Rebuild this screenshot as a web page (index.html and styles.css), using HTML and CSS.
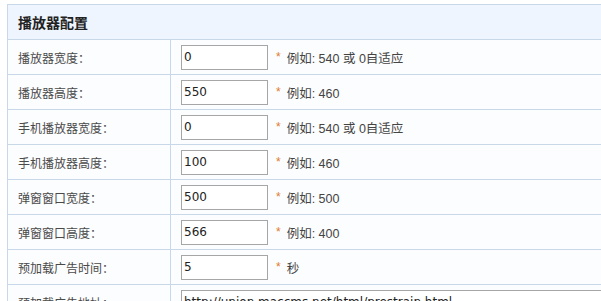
FILE: index.html
```html
<!DOCTYPE html>
<html lang="zh-CN">
<head>
  <meta charset="UTF-8">
  <title>播放器配置</title>
  <link rel="stylesheet" href="styles.css">
</head>
<body>
  <div class="config-wrap">
    <table class="config-table">
      <tr class="config-head">
        <th colspan="2">播放器配置</th>
      </tr>
      <tr>
        <td class="label">播放器宽度：</td>
        <td><input class="txt" type="text" value="0"><span class="req">*</span><span class="tip">例如: 540 或 0自适应</span></td>
      </tr>
      <tr>
        <td class="label">播放器高度：</td>
        <td><input class="txt" type="text" value="550"><span class="req">*</span><span class="tip">例如: 460</span></td>
      </tr>
      <tr>
        <td class="label">手机播放器宽度：</td>
        <td><input class="txt" type="text" value="0"><span class="req">*</span><span class="tip">例如: 540 或 0自适应</span></td>
      </tr>
      <tr>
        <td class="label">手机播放器高度：</td>
        <td><input class="txt" type="text" value="100"><span class="req">*</span><span class="tip">例如: 460</span></td>
      </tr>
      <tr>
        <td class="label">弹窗窗口宽度：</td>
        <td><input class="txt" type="text" value="500"><span class="req">*</span><span class="tip">例如: 500</span></td>
      </tr>
      <tr>
        <td class="label">弹窗窗口高度：</td>
        <td><input class="txt" type="text" value="566"><span class="req">*</span><span class="tip">例如: 400</span></td>
      </tr>
      <tr>
        <td class="label">预加载广告时间：</td>
        <td><input class="txt" type="text" value="5"><span class="req">*</span><span class="tip">秒</span></td>
      </tr>
      <tr>
        <td class="label">预加载广告地址：</td>
        <td><input class="txt txt-long" type="text" value="http://union.maccms.net/html/prestrain.html"></td>
      </tr>
    </table>
  </div>
</body>
</html>
```

FILE: styles.css
```css
* {
  margin: 0;
  padding: 0;
  box-sizing: border-box;
}

body {
  font-family: "Liberation Sans", "Noto Sans CJK SC", sans-serif;
  font-size: 12px;
  color: #333;
  background: #fff;
  overflow: hidden;
}

.config-wrap {
  padding: 4px 0 0 7px;
  width: 1000px;
}

.config-table {
  border-collapse: collapse;
  width: 900px;
}

.config-table th,
.config-table td {
  border: 1px solid #c9d8e8;
  height: 35px;
  text-align: left;
  vertical-align: middle;
  background: #fcfdfe;
}

.config-head th {
  background: #eef5fe;
  font-family: "Noto Sans CJK SC", sans-serif;
  font-size: 14px;
  font-weight: bold;
  color: #222;
  padding-left: 10px;
}

.config-table td.label {
  width: 163px;
  padding-left: 10px;
  color: #4a4a4a;
  font-family: "Noto Sans CJK SC", sans-serif;
}

.config-table td {
  padding-left: 10px;
}

.txt {
  width: 87px;
  height: 25px;
  border: 1px solid #a6a6a6;
  background: #fff;
  font-family: "DejaVu Sans", sans-serif;
  font-size: 12px;
  color: #222;
  padding: 0 2px;
  vertical-align: middle;
}

.txt-long {
  width: 500px;
}

.req {
  display: inline-block;
  color: #e07a2c;
  margin-left: 8px;
  vertical-align: middle;
}

.tip {
  display: inline-block;
  margin-left: 6px;
  color: #444;
  font-size: 12.5px;
  vertical-align: middle;
}
```
